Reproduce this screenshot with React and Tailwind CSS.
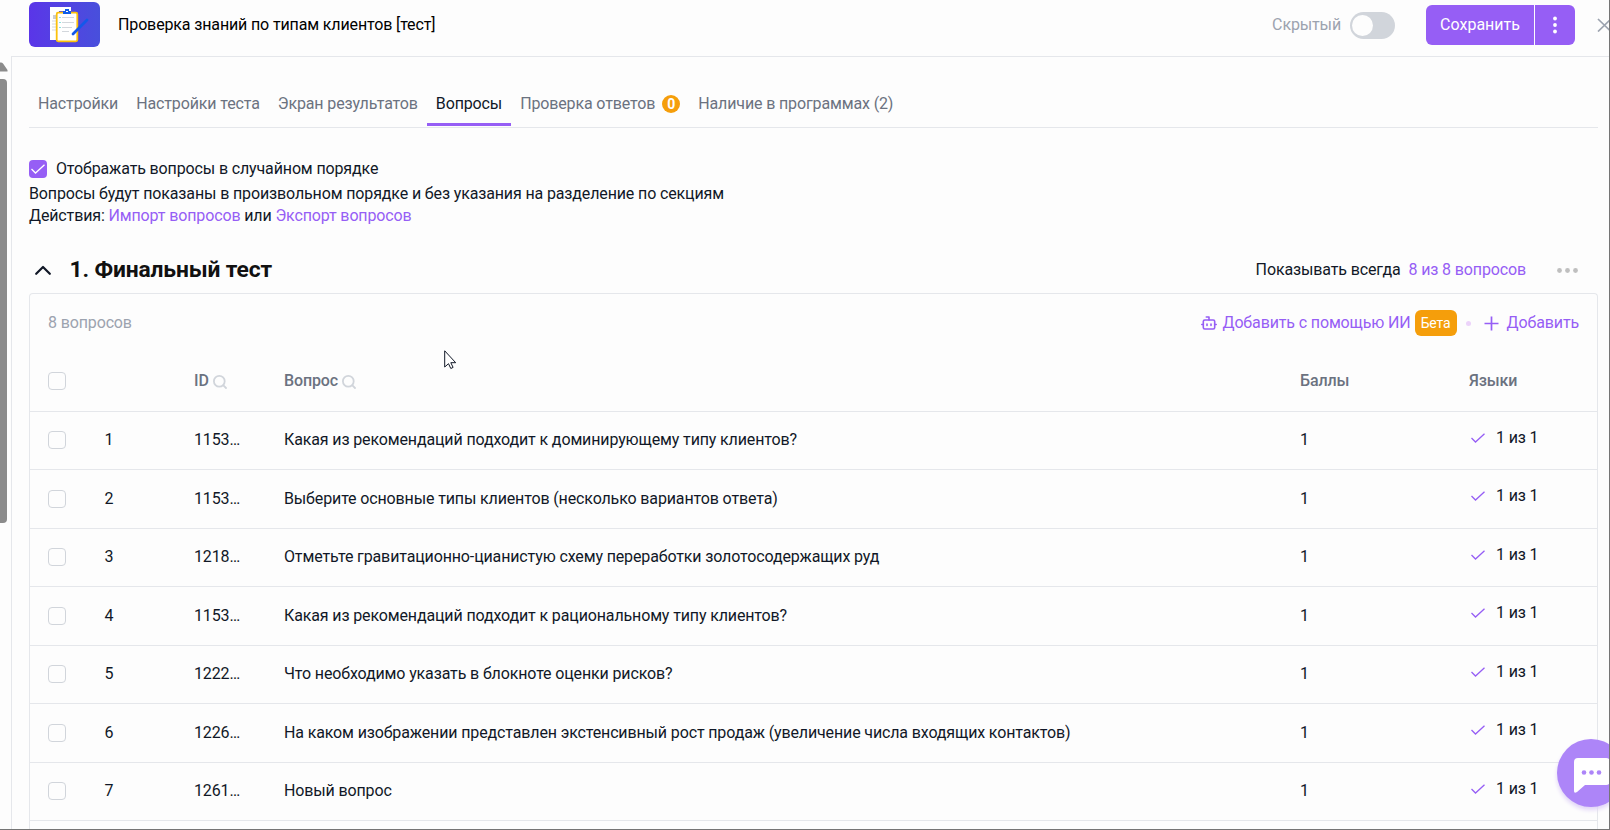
import { useState } from 'react';

const tabs = [
  { label: 'Настройки' },
  { label: 'Настройки теста' },
  { label: 'Экран результатов' },
  { label: 'Вопросы' },
  { label: 'Проверка ответов', badge: 0 },
  { label: 'Наличие в программах (2)' },
];

const questions = [
  { id: '1153…', title: 'Какая из рекомендаций подходит к доминирующему типу клиентов?' },
  { id: '1153…', title: 'Выберите основные типы клиентов (несколько вариантов ответа)' },
  { id: '1218…', title: 'Отметьте гравитационно-цианистую схему переработки золотосодержащих руд' },
  { id: '1153…', title: 'Какая из рекомендаций подходит к рациональному типу клиентов?' },
  { id: '1222…', title: 'Что необходимо указать в блокноте оценки рисков?' },
  { id: '1226…', title: 'На каком изображении представлен экстенсивный рост продаж (увеличение числа входящих контактов)' },
  { id: '1261…', title: 'Новый вопрос' },
];

const columns = 'grid grid-cols-[56.500px_89.500px_90px_1016px_169px_1fr] items-center pl-[18px]';

const Checkbox = () => <span className="block w-[18px] h-[18px] rounded-[4px] border border-[#d1d5db]" />;

const SearchIcon = () => (
  <svg width="14" height="14" viewBox="0 0 14 14" fill="none" stroke="#d1d5db" strokeWidth="1.800" strokeLinecap="round" className="mt-[2px]">
    <circle cx="6.3" cy="6.3" r="5.400" />
    <path d="M10.4 10.4 13 13" />
  </svg>
);

const Cover = () => (
  <div className="w-[71px] h-[45px] rounded-[6px] overflow-hidden bg-gradient-to-r from-[#5a35e8] to-[#484fdc]">
    <svg width="71" height="45" viewBox="0 0 71 45">
      <path d="M21 5h21v4H30v29h-9z" fill="#fff" />
      <rect x="24" y="13" width="5" height="4" fill="#c9ccd2" />
      <path d="M23 19h5M23 22h5M23 25h5M23 28h5" stroke="#d5d8de" />
      <rect x="27.7" y="10.7" width="20.6" height="28.6" rx="1.5" fill="#fff" stroke="#fbc10b" strokeWidth="1.8" />
      <path d="M34 12V9h2V7h4v2h2v3z" fill="#0f5ce8" />
      <path d="M37 9.500h2" stroke="#fff" />
      <path d="M33 15.500h12M33 20.500h12M33 25.500h10M33 29.500h7" stroke="#d3d7dc" />
      <path d="M30 15.500h2M30 20.500h2M30 25.500h2" stroke="#8be3df" />
      <path d="M44 32 58 18" stroke="#1358ea" strokeWidth="2.800" strokeLinecap="round" />
    </svg>
  </div>
);

const Header = () => (
  <header className="flex items-center h-[56px] pl-[29px]">
    <div className="self-start mt-[2px]"><Cover /></div>
    <h1 className="ml-[18px] mb-[7px] text-black">Проверка знаний по типам клиентов [тест]</h1>
    <div className="ml-auto flex items-center mb-[6px] shrink-0">
      <span className="text-[#9ca3af]">Скрытый</span>
      <span className="ml-[9px] w-[45px] h-[27px] rounded-full bg-[#d1d5db] p-[3px] pl-[2px]">
        <span className="block w-[21px] h-[21px] rounded-full bg-[#fdfdfd]" />
      </span>
      <button className="ml-[31px] w-[108px] h-10 rounded-l-[6px] bg-[#965ef5] text-white tracking-normal">Сохранить</button>
      <button className="ml-px w-10 h-10 rounded-r-[6px] bg-[#965ef5] flex items-center justify-center">
        <svg width="4" height="18" viewBox="0 0 4 18" fill="#fff">
          <circle cx="2" cy="2.500" r="1.900" />
          <circle cx="2" cy="9" r="1.900" />
          <circle cx="2" cy="15.500" r="1.900" />
        </svg>
      </button>
      <svg width="12" height="14" viewBox="0 0 12 14" fill="none" stroke="#9ca3af" strokeWidth="1.700" className="ml-[22px]">
        <path d="M1 1 14 13.500M1 13.500 14 1" />
      </svg>
    </div>
  </header>
);

const Tabs = ({ active, onChange }) => (
  <nav className="flex h-[71px] items-end border-b border-[#e5e7eb]">
    {tabs.map((t, i) => (
      <button
        key={t.label}
        onClick={() => onChange(i)}
        className={`flex items-center h-[38px] px-[9px] pb-[4px] mb-px whitespace-nowrap border-b-[3px] ${i === active ? 'border-[#965ef5] text-[#111827]' : 'border-transparent text-[#6b7280]'}`}
      >
        {t.label}
        {t.badge !== undefined && (
          <span className="ml-[7px] w-[18px] h-[18px] rounded-full bg-[#f59e0b] text-white text-sm font-bold leading-[18px]">{t.badge}</span>
        )}
      </button>
    ))}
  </nav>
);

const QuestionTable = () => (
  <div className="rounded-t-[4px] border border-b-0 border-[#e5e7eb]">
    <div className="flex items-center h-[58px] pl-[18px] pr-[18px]">
      <span className="text-[#9ca3af]">8 вопросов</span>
      <div className="ml-auto flex items-center text-[#965ef5]">
        <svg width="16" height="14" viewBox="0 0 16 14" fill="none" stroke="currentColor" strokeWidth="1.600" strokeLinecap="round" strokeLinejoin="round">
          <path d="M5.300 1H8v3M0.800 8.500h1.500M13.700 8.500h1.500M6 8v1.500M10 8v1.500" />
          <rect x="2.300" y="4" width="11.400" height="9" rx="1.500" />
        </svg>
        <span className="ml-[5px]">Добавить с помощью ИИ</span>
        <span className="ml-[4px] w-[42px] h-[26px] rounded-[6px] bg-[#f59e0b] text-white text-sm text-center leading-[26px]">Бета</span>
        <span className="ml-[9px] w-[5px] h-[5px] rounded-full bg-[#ecd3fa]" />
        <svg width="15" height="15" viewBox="0 0 15 15" stroke="currentColor" strokeWidth="1.700" className="ml-[13px]">
          <path d="M7.500 0.500v14M0.500 7.500h14" />
        </svg>
        <span className="ml-2">Добавить</span>
      </div>
    </div>
    <div className={`${columns} h-[59.500px] border-b border-[#e5e7eb] font-medium text-[#6b7280]`}>
      <Checkbox />
      <span />
      <span className="flex items-center gap-1">ID <SearchIcon /></span>
      <span className="flex items-center gap-1">Вопрос <SearchIcon /></span>
      <span>Баллы</span>
      <span>Языки</span>
    </div>
    {questions.map((q, i) => (
      <div key={i} className={`${columns} h-[58.500px] border-b border-[#e5e7eb] text-[#111827]`}>
        <Checkbox />
        <span>{i + 1}</span>
        <span>{q.id}</span>
        <span>{q.title}</span>
        <span>1</span>
        <span className="flex items-center pb-[5px]">
          <svg width="14" height="10" viewBox="0 0 14 10" fill="none" stroke="#965ef5" strokeWidth="1.300" className="ml-[2px]">
            <path d="M0.500 5 4.500 9 13.500 0.700" />
          </svg>
          <span className="ml-[11px]">1 из 1</span>
        </span>
      </div>
    ))}
    <div className="h-5" />
  </div>
);

const App = () => {
  const [active, setActive] = useState(3);

  return (
    <div className="relative w-[1610px] h-[830px] overflow-hidden bg-[#fdfdfd] border-r border-b border-[#757575] font-['Roboto','Liberation_Sans',sans-serif] text-base leading-[22px] tracking-[-0.135px] text-[#111827]">
      <Header />
      <div className="flex">
        <div className="w-[11px] shrink-0">
          <svg width="8" height="10" viewBox="0 0 8 10" className="mt-[6px]">
            <path d="M0 0.500 Q2 0 3 1.500L7.500 8V9.500H0z" fill="#8b8b8b" />
          </svg>
          <div className="mt-[7px] w-[7px] h-[444px] rounded-r-[4px] bg-[#8b8b8b]" />
        </div>
        <main className="flex-1 h-[780px] border-l border-t border-[#e5e7eb] pl-[17px] pr-[11px]">
          <Tabs active={active} onChange={setActive} />
          <section className="pt-[30px]">
            <label className="flex items-center h-[22px]">
              <span className="w-[18px] h-[18px] rounded-[4px] bg-[#965ef5] flex items-center justify-center">
                <svg width="14" height="10" viewBox="0 0 14 10" fill="none" stroke="#fff" strokeWidth="1.300">
                  <path d="M0.500 5 4.500 9 13.500 0.700" />
                </svg>
              </span>
              <span className="ml-[9px]">Отображать вопросы в случайном порядке</span>
            </label>
            <p className="mt-[3px]">Вопросы будут показаны в произвольном порядке и без указания на разделение по секциям</p>
            <p>Действия: <a className="text-[#965ef5]">Импорт вопросов</a> или <a className="text-[#965ef5]">Экспорт вопросов</a></p>
          </section>
          <div className="flex items-center mt-[21px] mb-px h-[44px]">
            <svg width="16" height="10" viewBox="0 0 16 10" fill="none" stroke="#111827" strokeWidth="2.200" strokeLinecap="round" strokeLinejoin="round" className="ml-[5.500px]">
              <path d="M1.200 8.800 8 2 14.800 8.800" />
            </svg>
            <h2 className="ml-[19px] mb-px text-[22.800px] font-bold leading-8 text-[#111]">1. Финальный тест</h2>
            <span className="ml-auto">Показывать всегда</span>
            <a className="ml-2 text-[#965ef5]">8 из 8 вопросов</a>
            <svg width="21" height="5" viewBox="0 0 21 5" fill="#bfbfbf" className="ml-[31px] mr-5">
              <circle cx="2.500" cy="2.500" r="2.400" />
              <circle cx="10.500" cy="2.500" r="2.400" />
              <circle cx="18.500" cy="2.500" r="2.400" />
            </svg>
          </div>
          <QuestionTable />
        </main>
      </div>
      <svg width="13" height="20" viewBox="0 0 13 20" className="absolute left-[444px] top-[350px]">
        <path d="M0.700 0.800V17l3.800-3.300 2.300 4.800 2.300-1.100-2.300-4.700h4.900z" fill="#fff" stroke="#111827" />
      </svg>
      <button className="absolute left-[1557px] top-[739px] w-[68px] h-[68px] rounded-full bg-[#ad85f8] shadow-[0_3px_4px_#e0d3f7]">
        <svg width="36" height="36" viewBox="0 0 36 36" className="absolute left-[17px] top-[19px]">
          <path d="M4 0h28q4 0 4 4v19q0 4-4 4H11L3 34q-3 2-3-1V4q0-4 4-4z" fill="#fff" />
          <circle cx="10" cy="14.500" r="2.300" fill="#ad85f8" />
          <circle cx="17.500" cy="14.500" r="2.300" fill="#ad85f8" />
          <circle cx="25" cy="14.500" r="2.300" fill="#ad85f8" />
        </svg>
      </button>
    </div>
  );
};

export default App;
